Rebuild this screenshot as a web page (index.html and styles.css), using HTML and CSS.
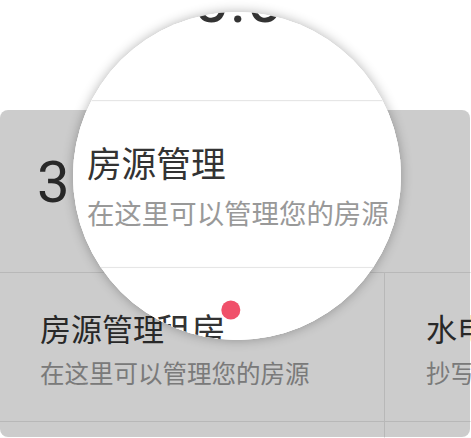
FILE: index.html
```html
<!DOCTYPE html>
<html lang="zh-CN">
<head>
<meta charset="utf-8">
<title>房源管理引导</title>
<link rel="stylesheet" href="styles.css">
</head>
<body>
<div class="stage">
  <div class="screen">
    <div class="hero"></div>
    <div class="card">
      <div class="summary"><span class="amount">3160.00</span></div>
      <div class="grid">
        <div class="cell">
          <div class="cell-title"><span class="title-text">房源管理</span></div>
          <div class="cell-sub">在这里可以管理您的房源</div>
        </div>
        <div class="cell cell--side">
          <div class="cell-title"><span class="title-text">水电抄表</span></div>
          <div class="cell-sub">抄写水电表读数</div>
        </div>
        <div class="cell">
          <div class="cell-title"><span class="title-text">我的租房<span class="badge"></span></span></div>
          <div class="cell-sub">在这里查看您的租房</div>
        </div>
        <div class="cell cell--side">
          <div class="cell-title"><span class="title-text">合同管理</span></div>
          <div class="cell-sub">管理租房合同</div>
        </div>
      </div>
    </div>
  </div>

  <div class="mask"></div>

  <div class="lens" aria-hidden="true">
    <div class="screen screen--zoom">
      <div class="hero"></div>
      <div class="card">
        <div class="summary"><span class="amount">3160.00</span></div>
        <div class="grid">
          <div class="cell">
            <div class="cell-title"><span class="title-text">房源管理</span></div>
            <div class="cell-sub">在这里可以管理您的房源</div>
          </div>
          <div class="cell cell--side">
            <div class="cell-title"><span class="title-text">水电抄表</span></div>
            <div class="cell-sub">抄写水电表读数</div>
          </div>
          <div class="cell">
            <div class="cell-title"><span class="title-text">我的租房<span class="badge"></span></span></div>
            <div class="cell-sub">在这里查看您的租房</div>
          </div>
          <div class="cell cell--side">
            <div class="cell-title"><span class="title-text">合同管理</span></div>
            <div class="cell-sub">管理租房合同</div>
          </div>
        </div>
      </div>
    </div>
  </div>
</div>
</body>
</html>
```
FILE: styles.css
```css
* {
  box-sizing: border-box;
}

html, body {
  margin: 0;
  padding: 0;
  background: #ffffff;
}

body {
  font-family: "Noto Sans CJK SC", "Noto Sans", sans-serif;
  color: #333333;
}

.stage {
  position: relative;
  width: 471px;
  height: 438px;
  overflow: hidden;
  background: #ffffff;
}

.screen {
  width: 471px;
  background: #ffffff;
}

.hero {
  height: 110px;
}

.card {
  background: #ffffff;
}

.summary {
  height: 163px;
  padding: 43px 0 0 37px;
  border-bottom: 1px solid #e6e6e6;
}

.amount {
  display: block;
  font-family: Roboto, "Liberation Sans", sans-serif;
  font-size: 58px;
  line-height: 1;
  color: #333333;
  white-space: nowrap;
}

.grid {
  display: grid;
  grid-template-columns: 384px minmax(0, 1fr);
}

.cell {
  padding: 39px 0 36px 40px;
  border-bottom: 1px solid #e6e6e6;
  overflow: hidden;
  white-space: nowrap;
}

.cell--side {
  border-left: 1px solid #e6e6e6;
  padding-left: 41px;
}

.cell-title {
  font-size: 31px;
  line-height: 1;
  color: #333333;
}

.title-text {
  position: relative;
  display: inline-block;
}

.badge {
  position: absolute;
  right: -13px;
  top: -10px;
  width: 17px;
  height: 17px;
  border-radius: 50%;
  background: #f0506a;
}

.cell-sub {
  margin-top: 17.5px;
  font-size: 24.5px;
  line-height: 1;
  color: #999999;
}

.mask {
  position: absolute;
  left: 0;
  top: 110px;
  width: 470px;
  height: 327px;
  border-radius: 8px;
  background: rgba(0, 0, 0, 0.2);
}

.lens {
  position: absolute;
  left: 73px;
  top: 12px;
  width: 328px;
  height: 328px;
  border-radius: 50%;
  overflow: hidden;
  background: #ffffff;
  box-shadow: 0 0 12px rgba(0, 0, 0, 0.3);
}

.screen--zoom {
  position: absolute;
  left: 0;
  top: 0;
  transform-origin: 0 0;
  transform: translate(-30.9px, -216.6px) scale(1.12);
}
```
